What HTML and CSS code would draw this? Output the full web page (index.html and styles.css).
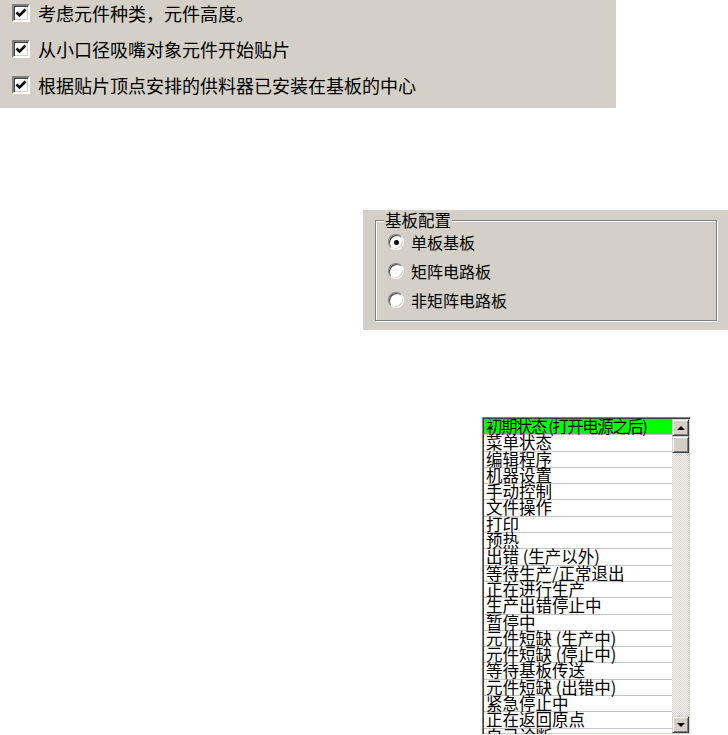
FILE: index.html
```html
<!DOCTYPE html>
<html lang="zh-CN">
<head>
    <meta charset="UTF-8">
    <meta name="viewport" content="width=device-width, initial-scale=1.0">
    <title>贴片设置</title>
    <link rel="stylesheet" href="styles.css">
</head>
<body>
    <div class="options">
        <div class="check-row">
            <span class="checkbox"><svg width="12" height="12" viewBox="0 0 12 12"><polyline points="1.5,5.5 4.5,8.5 10.5,2.5" fill="none" stroke="#000" stroke-width="2.6"/></svg></span>
            <span>考虑元件种类，元件高度。</span>
        </div>
        <div class="check-row">
            <span class="checkbox"><svg width="12" height="12" viewBox="0 0 12 12"><polyline points="1.5,5.5 4.5,8.5 10.5,2.5" fill="none" stroke="#000" stroke-width="2.6"/></svg></span>
            <span>从小口径吸嘴对象元件开始贴片</span>
        </div>
        <div class="check-row">
            <span class="checkbox"><svg width="12" height="12" viewBox="0 0 12 12"><polyline points="1.5,5.5 4.5,8.5 10.5,2.5" fill="none" stroke="#000" stroke-width="2.6"/></svg></span>
            <span>根据贴片顶点安排的供料器已安装在基板的中心</span>
        </div>
    </div>

    <div class="board-panel">
        <fieldset class="group">
            <legend>基板配置</legend>
            <div class="radio-row"><span class="radio on"></span>单板基板</div>
            <div class="radio-row"><span class="radio"></span>矩阵电路板</div>
            <div class="radio-row"><span class="radio"></span>非矩阵电路板</div>
        </fieldset>
    </div>

    <div class="state-list">
        <ul class="items">
            <li class="current">初期状态 (打开电源之后)</li>
            <li>菜单状态</li>
            <li>编辑程序</li>
            <li>机器设置</li>
            <li>手动控制</li>
            <li>文件操作</li>
            <li>打印</li>
            <li>预热</li>
            <li>出错 (生产以外)</li>
            <li>等待生产/正常退出</li>
            <li>正在进行生产</li>
            <li>生产出错停止中</li>
            <li>暂停中</li>
            <li>元件短缺 (生产中)</li>
            <li>元件短缺 (停止中)</li>
            <li>等待基板传送</li>
            <li>元件短缺 (出错中)</li>
            <li>紧急停止中</li>
            <li>正在返回原点</li>
            <li>自己诊断</li>
        </ul>
        <div class="scrollbar">
            <div class="sb-btn up"></div>
            <div class="sb-thumb"></div>
            <div class="sb-track"></div>
            <div class="sb-btn down"></div>
        </div>
    </div>
</body>
</html>
```
FILE: styles.css
```css
body {
    margin: 0;
    background: #fff;
    color: #000;
    font-family: "Noto Sans CJK SC", "Noto Sans", sans-serif;
    overflow: hidden;
}

/* top option panel */
.options {
    width: 616px;
    height: 108px;
    box-sizing: border-box;
    padding-top: 3px;
    background: #d4d0c8;
    display: flex;
    flex-direction: column;
    gap: 16px;
}
.check-row {
    display: flex;
    align-items: center;
    gap: 8px;
    height: 20px;
    padding-left: 12px;
    font-size: 18px;
    line-height: 20px;
}
.checkbox {
    width: 18px;
    height: 18px;
    box-sizing: border-box;
    background: #fff;
    border: 2px solid;
    border-color: #808080 #fff #fff #808080;
    box-shadow: inset 1px 1px #404040, inset -1px -1px #d4d0c8;
    display: flex;
    align-items: center;
    justify-content: center;
}

/* board config group */
.board-panel {
    margin: 102px 0 0 363px;
    width: 365px;
    height: 120px;
    box-sizing: border-box;
    padding: 0 0 0 12px;
    background: #d4d0c8;
}
.group {
    margin: 0;
    width: 342px;
    box-sizing: border-box;
    border: 1px solid #808080;
    box-shadow: inset 1px 1px #fff, 1px 1px #fff;
    padding: 0 0 8px 8px;
}
.group legend {
    padding: 0 1px;
    font-size: 16.5px;
    line-height: 20px;
    background: #d4d0c8;
}
.radio-row {
    display: flex;
    align-items: center;
    gap: 7px;
    height: 24px;
    margin-left: 4px;
    font-size: 16px;
}
.radio-row + .radio-row {
    margin-top: 5px;
}
.radio {
    width: 16px;
    height: 16px;
    box-sizing: border-box;
    border-radius: 50%;
    background: #fff;
    border: 1px solid;
    border-color: #808080 #fff #fff #808080;
    box-shadow: inset 1px 1px #404040, inset -1px -1px #d4d0c8;
    display: flex;
    align-items: center;
    justify-content: center;
}
.radio.on::after {
    content: "";
    width: 5px;
    height: 5px;
    border-radius: 50%;
    background: #000;
}

/* state list box */
.state-list {
    margin: 87px 0 0 482px;
    width: 209px;
    height: 318px;
    box-sizing: border-box;
    border: 1px solid;
    border-color: #808080 #fff #fff #808080;
    box-shadow: inset 1px 1px #404040, inset -1px -1px #d4d0c8;
    background: #fff;
    display: flex;
}
.items {
    flex: 1;
    list-style: none;
    margin: 0;
    padding: 1px 0 0 1px;
    overflow: hidden;
    font-size: 16.5px;
}
.items li {
    height: 16.3px;
    box-sizing: border-box;
    border-bottom: 1px solid #c4c4c4;
    padding-left: 2px;
    line-height: 15px;
    white-space: nowrap;
}
.items li.current {
    background: #00ff00;
    letter-spacing: -1.5px;
}
.scrollbar {
    width: 17px;
    margin: 1px 1px 1px 0;
    display: flex;
    flex-direction: column;
    background: repeating-conic-gradient(#d4d0c8 0 25%, #fff 0 50%) 0 0 / 2px 2px;
}
.sb-btn, .sb-thumb {
    height: 17px;
    box-sizing: border-box;
    background: #d4d0c8;
    border: 1px solid;
    border-color: #d4d0c8 #404040 #404040 #d4d0c8;
    box-shadow: inset 1px 1px #fff, inset -1px -1px #808080;
    display: flex;
    align-items: center;
    justify-content: center;
}
.sb-track {
    flex: 1;
}
.sb-btn.up::after {
    content: "";
    border-left: 4px solid transparent;
    border-right: 4px solid transparent;
    border-bottom: 4px solid #000;
}
.sb-btn.down::after {
    content: "";
    border-left: 4px solid transparent;
    border-right: 4px solid transparent;
    border-top: 4px solid #000;
}
```
